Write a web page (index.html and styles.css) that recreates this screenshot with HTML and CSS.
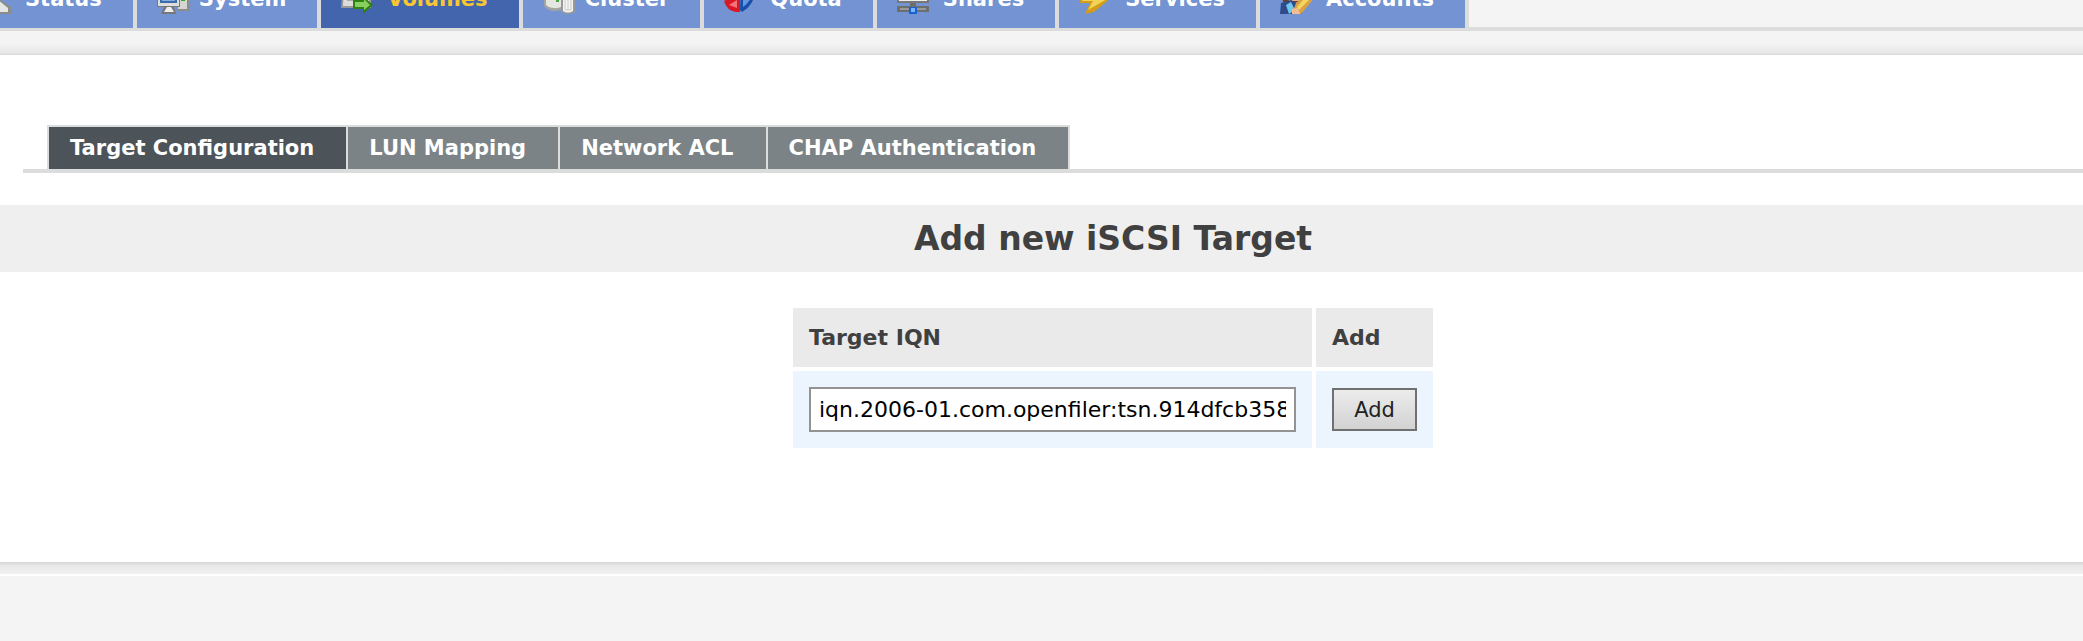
FILE: index.html
```html
<!DOCTYPE html>
<html lang="en">
<head>
<meta charset="utf-8">
<title>Openfiler - iSCSI Targets</title>
<link rel="stylesheet" href="styles.css">
</head>
<body>
<nav class="main-nav" aria-label="Main">
  <a class="main-tab" href="#"><svg class="icon" viewBox="0 0 32 32"><path d="M12 6h8v10l12 8v7H0V20l12-4z" fill="#8b8b88"/><path d="M12 6h7v11l10 8v4H0V20l12-4z" fill="#e6e6e4"/></svg>Status</a>
  <a class="main-tab snug" href="#"><svg class="icon" viewBox="0 0 32 32"><path d="M20 3h12v25H20z" fill="#8c8c8c"/><path d="M21 4h9v22h-9z" fill="#d5d5d2"/><path d="M24 15h4v3h-4z" fill="#35a52c"/><path d="M0 4h23v20H0z" fill="#777"/><path d="M1 5h21v18H1z" fill="#ddd"/><path d="M3 6h17v14H3z" fill="#3c6ca8"/><path d="M5 8h13v10H5z" fill="#82aee2"/><path d="M7 24h10l2 7H4z" fill="#777"/><path d="M10 24h4l3 5H7z" fill="#eee"/></svg>System</a>
  <a class="main-tab current" href="#" aria-current="page"><svg class="icon" viewBox="0 0 32 32"><path d="M2 2h28v23H0z" fill="#999"/><path d="M3 2h25v21H2z" fill="#dcdcdc"/><path d="M7 4h18v14H6z" fill="#aaa"/><path d="M12 17h9v-5l11 10-10 9v-5H12z" fill="#2d8212"/><path d="M14 19h9v-3l6 6-6 5v-3h-9z" fill="#87cf60"/></svg>Volumes</a>
  <a class="main-tab snug" href="#"><svg class="icon" viewBox="0 0 32 32"><path d="M1 2h26v18q-7 9-17 8-6-1-9-5z" fill="#a3a5a0"/><path d="M3 2h22v17q-7 7-14 6-5 0-8-3z" fill="#e5e7e0"/><path d="M13 16h3v3h-3z" fill="#48a747"/><path d="M18 12h14v17q-7 4-14 0z" fill="#999"/><path d="M20 12h10v16q-5 3-10 0z" fill="#f4f4f1"/><path d="M22 16h6v11h-6zM25 16v11" fill="none" stroke="#ccc"/></svg>Cluster</a>
  <a class="main-tab" href="#"><svg class="icon" viewBox="0 0 32 32"><path d="M0 17 15 4v13z" fill="#2b9b38"/><path d="M0 18l4-2h12v13h-4Q3 28 0 18z" fill="#d71925"/><path d="M5 22l8-5v8z" fill="#f4727a"/><path d="M17 4h13q3 16-12 25l-2-2z" fill="#1650ab"/><path d="M19 6h9q1 11-9 18z" fill="#6398df"/></svg>Quota</a>
  <a class="main-tab" href="#"><svg class="icon" viewBox="0 0 32 32"><path d="M0 2h32v18H0z" fill="#777"/><path d="M2 3h28v15H2z" fill="#eee"/><path d="M5 3h22v13H5z" fill="#aaa"/><path d="M13 20h6v4h-6zM0 23h32v6H0z" fill="#6e6e6e"/><path d="M3 25h26v2H3z" fill="#999"/><path d="M12 24h8v7h-8z" fill="#1762cf"/><path d="M14 25h4v4h-4z" fill="#7ab4ff"/></svg>Shares</a>
  <a class="main-tab" href="#"><svg class="icon" viewBox="0 0 32 32"><path d="m11 0-11 20h11l-5 11 9-2 17-14H20L28 0z" fill="#d49c19"/><path d="m13 0-10 18h11l-5 9L28 16H15l8-16z" fill="#f4d456"/></svg>Services</a>
  <a class="main-tab" href="#"><svg class="icon" viewBox="0 0 32 32"><path d="M2 0h17v19H3z" fill="#67422a"/><path d="M7 5h12v13H9z" fill="#edb187"/><path d="m1 20 10-3 8 4 3 10H0z" fill="#304b8b"/><path d="m6 22 5-3 4 8-6 4z" fill="#6fc8ed"/><path d="m12 31 4-11L31 8l1 10-11 13z" fill="#d9a344"/><path d="m17 24 11-13 3 4-12 12z" fill="#f4d35e"/><path d="m12 26 6-1 2 6h-8z" fill="#f2bd91"/></svg>Accounts</a>
</nav>
<div class="shade-top"></div>
<main class="content">
  <nav class="sub-nav" aria-label="iSCSI">
    <a class="sub-tab selected" href="#" aria-current="page">Target Configuration</a>
    <a class="sub-tab" href="#">LUN Mapping</a>
    <a class="sub-tab" href="#">Network ACL</a>
    <a class="sub-tab" href="#">CHAP Authentication</a>
  </nav>
  <h1 class="title">Add new iSCSI Target</h1>
  <form class="target-form">
    <table class="target-table">
      <thead><tr><th scope="col"><label for="iqn">Target IQN</label></th><th scope="col">Add</th></tr></thead>
      <tbody><tr><td><input class="iqn" id="iqn" type="text" value="iqn.2006-01.com.openfiler:tsn.914dfcb358e9"></td><td><button class="add" type="button">Add</button></td></tr></tbody>
    </table>
  </form>
</main>
<div class="shade-bottom"></div>
</body>
</html>
```
FILE: styles.css
```css
* { box-sizing: border-box; }

body {
  margin: 0;
  background: #f4f4f4;
  color: #404040;
  font-family: Verdana, "DejaVu Sans", sans-serif;
  font-size: 21px;
  overflow-x: hidden;
}

.main-nav {
  display: flex;
  height: 31px;
  align-items: flex-end;
  border-bottom: 4px solid #dcdcdc;
  font-weight: bold;
}

.main-tab {
  display: flex;
  flex: none;
  align-items: center;
  gap: 14px;
  height: 58px;
  margin-bottom: -1px;
  padding: 0 31px 0 20px;
  background: #7393d3;
  border-right: 4px solid #dcdcdc;
  box-sizing: content-box;
  color: #fff;
  text-decoration: none;
}

.main-tab:first-child { margin-left: -41px; }
.main-tab.snug { gap: 10px; }
.main-tab.current { background: #4265ad; color: #f8c630; }

.icon { width: 32px; height: 32px; flex: none; }

.shade-top {
  height: 24px;
  background: linear-gradient(#f4f4f4 50%, #e8e8e8 90%, #d8d8d8);
}

.content {
  padding: 70px 0 110px;
  background: #fff;
}

.sub-nav {
  display: flex;
  margin-left: 23px;
  padding-left: 24px;
  border-bottom: 4px solid #dcdcdc;
}

.sub-tab {
  padding: 0 32px 0 21px;
  border: 2px solid #dcdcdc;
  border-width: 2px 2px 0 0;
  background: #7b8387;
  color: #fff;
  font-weight: bold;
  line-height: 42px;
  text-decoration: none;
}

.sub-tab.selected { border-left-width: 2px; background: #4c545a; }

.title {
  margin: 32px 0;
  padding-left: 143px;
  background: #efefef;
  font-size: 33px;
  line-height: 67px;
  text-align: center;
}

.target-form { display: flex; justify-content: center; padding-left: 143px; }

.target-table { border-collapse: separate; border-spacing: 4px; font-size: 22px; }

.target-table th, .target-table td { padding: 0 16px; text-align: left; }
.target-table th { height: 59px; background: #eaeaea; }
.target-table td { height: 77px; background: #ecf5fd; }

.iqn {
  display: block;
  width: 487px;
  height: 45px;
  padding: 0 8px;
  border: 2px solid #939393;
  background: #fff;
  color: #000;
  font: inherit;
}

.add {
  display: block;
  width: 85px;
  height: 43px;
  padding: 0;
  border: 2px solid #707070;
  background: linear-gradient(#ececec, #d2d2d2);
  color: #222;
  font: inherit;
  font-size: 21px;
}

.shade-bottom {
  height: 14px;
  border-bottom: 2px solid #fff;
  background: linear-gradient(#d6d6d6, #e8e8e8 30%, #f1f1f1);
}
```
